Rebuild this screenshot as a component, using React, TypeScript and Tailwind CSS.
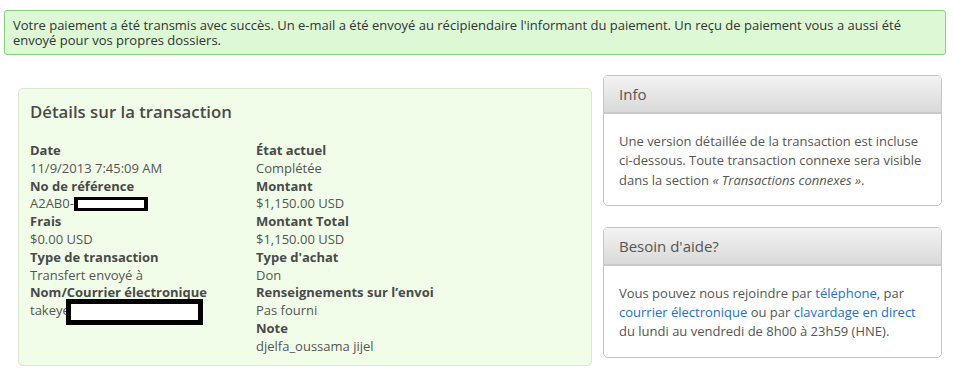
import React from 'react';

type Field = { label: string; value: React.ReactNode };

function Redacted({ className }: { className: string }) {
  return <span className={`inline-block align-middle bg-white border-black ${className}`} />;
}

const leftFields: Field[] = [
  { label: 'Date', value: '11/9/2013 7:45:09 AM' },
  {
    label: 'No de référence',
    value: (
      <span className="flex items-center">
        A2AB0-
        <Redacted className="w-[74px] h-[14px] border-[4px] border-y-[3px]" />
      </span>
    ),
  },
  { label: 'Frais', value: '$0.00 USD' },
  { label: 'Type de transaction', value: 'Transfert envoyé à' },
  {
    label: 'Nom/Courrier électronique',
    value: (
      <span className="flex items-start">
        takeye
        <Redacted className="-ml-[4px] -mt-[3px] w-[137px] h-[26px] border-[5px]" />
      </span>
    ),
  },
];

const rightFields: Field[] = [
  { label: 'État actuel', value: 'Complétée' },
  { label: 'Montant', value: '$1,150.00 USD' },
  { label: 'Montant Total', value: '$1,150.00 USD' },
  { label: "Type d'achat", value: 'Don' },
  { label: 'Renseignements sur l’envoi', value: 'Pas fourni' },
  { label: 'Note', value: 'djelfa_oussama jijel' },
];

function FieldList({ fields, className }: { fields: Field[]; className: string }) {
  return (
    <dl className={className}>
      {fields.map((f) => (
        <div key={f.label}>
          <dt className="font-bold text-[#4a4a4a]">{f.label}</dt>
          <dd className="text-[#555]">{f.value}</dd>
        </div>
      ))}
    </dl>
  );
}

function SidePanel({ title, children }: { title: string; children: React.ReactNode }) {
  return (
    <div className="rounded-[5px] border border-[#c6c6c6] bg-white overflow-hidden">
      <div className="h-[38px] px-[15px] flex items-center bg-gradient-to-b from-[#f3f3f3] to-[#d9d9d9] border-b-2 border-[#c9c9c9] text-[15px] text-[#555]">
        {title}
      </div>
      <div className="px-[15px] pt-[18px] pb-[15px] text-[13px] leading-[19.3px] text-[#555]">{children}</div>
    </div>
  );
}

export default function App() {
  return (
    <div className="w-[954px] h-[388px] bg-white font-['Open_Sans',sans-serif] text-[13px] overflow-hidden">
      <div className="mx-[4px] mt-[10px] mr-[8px] rounded-[3px] border border-[#87d17a] bg-[#dcf8d5] px-[8px] pt-[7px] pb-[6px] leading-[15px] text-[#333]">
        Votre paiement a été transmis avec succès. Un e-mail a été envoyé au récipiendaire l'informant du paiement. Un reçu de paiement vous a aussi été envoyé pour vos propres dossiers.
      </div>

      <div className="flex gap-[11px] ml-[18px] mt-[20px]">
        <div className="w-[574px] h-[278px] mt-[13px] rounded-[5px] border border-[#d7e8cf] bg-[#f1fde9] px-[11px] pt-[11px]">
          <h2 className="text-[16.75px] font-semibold text-[#4a4a4a] leading-[24px]">Détails sur la transaction</h2>
          <div className="flex mt-[18px] leading-[17.8px]">
            <FieldList fields={leftFields} className="w-[226px]" />
            <FieldList fields={rightFields} className="flex-1" />
          </div>
        </div>

        <div className="w-[339px] flex flex-col gap-[21px]">
          <SidePanel title="Info">
            Une version détaillée de la transaction est incluse ci-dessous. Toute transaction connexe sera visible dans la section{' '}
            <i>« Transactions connexes »</i>.
          </SidePanel>
          <SidePanel title="Besoin d'aide?">
            Vous pouvez nous rejoindre par <a className="text-[#1a6fcf]">téléphone</a>, par{' '}
            <a className="text-[#1a6fcf]">courrier électronique</a> ou par{' '}
            <a className="text-[#1a6fcf]">clavardage en direct</a> du lundi au vendredi de 8h00 à 23h59 (HNE).
          </SidePanel>
        </div>
      </div>
    </div>
  );
}
